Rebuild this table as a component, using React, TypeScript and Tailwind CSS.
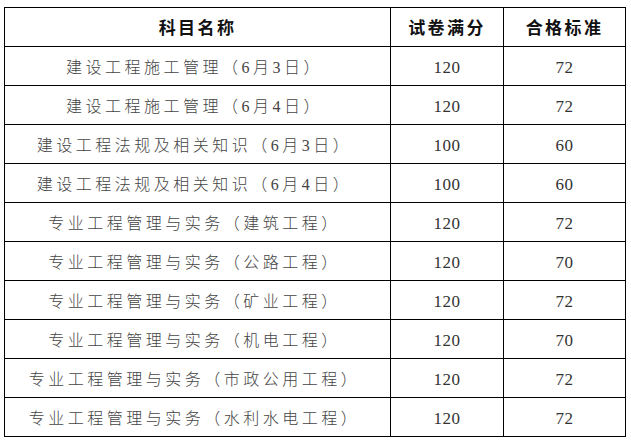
const rows: [string, string, string][] = [
  ["建设工程施工管理（6月3日）", "120", "72"],
  ["建设工程施工管理（6月4日）", "120", "72"],
  ["建设工程法规及相关知识（6月3日）", "100", "60"],
  ["建设工程法规及相关知识（6月4日）", "100", "60"],
  ["专业工程管理与实务（建筑工程）", "120", "72"],
  ["专业工程管理与实务（公路工程）", "120", "70"],
  ["专业工程管理与实务（矿业工程）", "120", "72"],
  ["专业工程管理与实务（机电工程）", "120", "70"],
  ["专业工程管理与实务（市政公用工程）", "120", "72"],
  ["专业工程管理与实务（水利水电工程）", "120", "72"],
];

export default function App() {
  return (
    <div className="min-h-[442px] w-[631px] bg-white pl-[4px] pt-[7px]">
      <table className="w-[621px] table-fixed border-collapse">
        <colgroup>
          <col className="w-[386px]" />
          <col className="w-[113px]" />
          <col className="w-[122px]" />
        </colgroup>
        <thead>
          <tr className="h-[39px]">
            {["科目名称", "试卷满分", "合格标准"].map((h) => (
              <th
                key={h}
                className="border-[1.5px] border-black p-0 text-center align-middle font-[family-name:'Noto_Sans_CJK_SC',sans-serif] text-[17px] font-bold tracking-[2.4px] text-[#111]"
              >
                {h}
              </th>
            ))}
          </tr>
        </thead>
        <tbody>
          {rows.map(([name, full, pass]) => (
            <tr key={name} className="h-[39px]">
              <td className="border-[1.5px] border-black p-0 pr-[6px] pt-[3px] text-center align-middle font-[family-name:'Liberation_Serif','Noto_Sans_CJK_SC',serif] text-[16px] font-light tracking-[3.5px] text-[#444]">
                {name}
              </td>
              <td className="border-[1.5px] border-black p-0 pt-[3px] text-center align-middle font-[family-name:'Liberation_Serif',serif] text-[17px] tracking-[0.5px] text-[#333]">
                {full}
              </td>
              <td className="border-[1.5px] border-black p-0 pt-[3px] text-center align-middle font-[family-name:'Liberation_Serif',serif] text-[17px] tracking-[0.5px] text-[#333]">
                {pass}
              </td>
            </tr>
          ))}
        </tbody>
      </table>
    </div>
  );
}
